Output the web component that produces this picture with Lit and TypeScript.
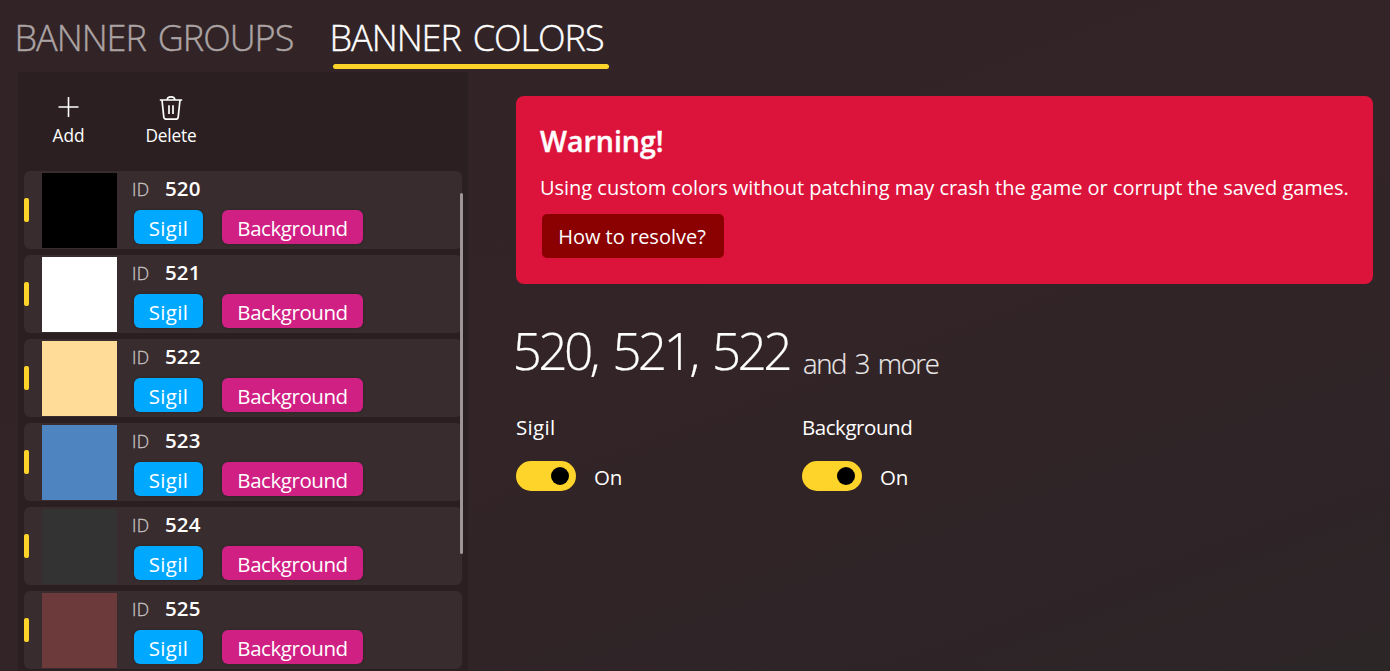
import { LitElement, html, css, svg } from "lit";
import { customElement, property } from "lit/decorators.js";

interface BannerColor {
  id: number;
  color: string;
}

const COLORS: BannerColor[] = [
  { id: 520, color: "#000000" },
  { id: 521, color: "#ffffff" },
  { id: 522, color: "#ffdc98" },
  { id: 523, color: "#4e85c0" },
  { id: 524, color: "#333333" },
  { id: 525, color: "#6c3a3b" },
];

const addIcon = svg`<path d="M11.5 1v20M1.5 11h20" stroke-width="1.6"/>`;
const deleteIcon = svg`<path d="M0.8 4H23.2M8.2 4C8.2 2.2 9.6 0.9 12 0.9S15.8 2.2 15.8 4M3 4L4.8 21.2Q5 23.2 7 23.2H17Q19 23.2 19.2 21.2L21 4M10 9.2V18M14 9.2V18" stroke-width="1.7"/>`;

@customElement("color-item")
class ColorItem extends LitElement {
  @property({ attribute: false }) item!: BannerColor;

  static styles = css`
    :host {
      display: flex;
      align-items: center;
      height: 78px;
      flex: none;
      border-radius: 6px;
      background: #382c2e;
    }
    .mark {
      width: 5px;
      height: 24px;
      border-radius: 2px;
      background: #ffd42a;
      margin-right: 13px;
    }
    .swatch {
      width: 75px;
      height: 75px;
      margin-top: 1px;
    }
    .info {
      display: flex;
      flex-direction: column;
      margin-left: 15px;
      height: 75px;
      margin-top: 1px;
    }
    .line {
      display: flex;
      align-items: baseline;
      height: 37px;
      line-height: 30px;
    }
    .label {
      width: 33px;
      font-size: 17.5px;
      font-weight: 300;
      letter-spacing: 0.4px;
      color: #c8c4c4;
      -webkit-text-stroke: 0.3px currentColor;
    }
    .id {
      font-size: 20.5px;
      font-weight: 600;
      letter-spacing: 0.1px;
    }
    .chips {
      display: flex;
      gap: 19px;
      padding-left: 2px;
    }
    .chip {
      height: 34px;
      box-sizing: border-box;
      padding-top: 1px;
      line-height: 34px;
      border-radius: 6px;
      text-align: center;
      font-size: 20.5px;
      box-shadow: 0 0 3px rgba(0, 0, 0, 0.3);
    }
    .sigil {
      width: 69px;
      background: #00a8ff;
      letter-spacing: 0.3px;
    }
    .bg {
      width: 141px;
      background: #d02084;
      letter-spacing: -0.45px;
    }
  `;

  render() {
    return html`
      <div class="mark"></div>
      <div class="swatch" style="background:${this.item.color}"></div>
      <div class="info">
        <div class="line"><span class="label">ID</span><span class="id">${this.item.id}</span></div>
        <div class="chips"><span class="chip sigil">Sigil</span><span class="chip bg">Background</span></div>
      </div>
    `;
  }
}

@customElement("toggle-field")
class ToggleField extends LitElement {
  @property() label = "";

  static styles = css`
    :host {
      display: block;
      width: 286px;
      font-size: 20.5px;
    }
    .label {
      line-height: 28px;
      height: 48px;
    }
    .label.narrow { letter-spacing: -0.45px; }
    .label.wide { letter-spacing: 0.3px; }
    .row {
      display: flex;
      align-items: center;
      gap: 18px;
      height: 30px;
      line-height: 30px;
    }
    .track {
      display: flex;
      align-items: center;
      justify-content: flex-end;
      box-sizing: border-box;
      width: 60px;
      height: 30px;
      padding-right: 7px;
      border-radius: 15px;
      background: #ffd42a;
    }
    .thumb {
      width: 18px;
      height: 18px;
      border-radius: 50%;
      background: #000;
    }
    .state {
      padding-top: 1px;
      letter-spacing: -0.3px;
    }
  `;

  render() {
    return html`
      <div class="label ${this.label.length > 6 ? "narrow" : "wide"}">${this.label}</div>
      <div class="row"><div class="track"><div class="thumb"></div></div><span class="state">On</span></div>
    `;
  }
}

@customElement("app-root")
class AppRoot extends LitElement {
  static styles = css`
    :host {
      display: flex;
      flex-direction: column;
      position: relative;
      width: 1390px;
      height: 671px;
      overflow: hidden;
      background: linear-gradient(160deg, #322326 0%, #322427 55%, #2e2427 85%, #2c2627 100%);
      color: #fff;
      font-family: "Open Sans", "Noto Sans", sans-serif;
      white-space: nowrap;
    }
    .tabs {
      display: flex;
      height: 72px;
      flex: none;
      box-sizing: border-box;
      padding: 11px 0 0 14.5px;
      font-size: 36px;
      font-weight: 300;
      line-height: 53px;
      -webkit-text-stroke: 0.4px currentColor;
    }
    .tab {
      width: 315px;
      letter-spacing: -1px;
      word-spacing: 3.5px;
      color: #aca4a4;
    }
    .tab.active {
      width: 280px;
      color: #fff;
    }
    .underline {
      width: 276px;
      height: 5px;
      margin-left: 3.5px;
      border-radius: 2.5px;
      background: #ffd42a;
    }
    .body {
      display: flex;
      flex: 1;
      min-height: 0;
      padding-left: 18px;
    }
    .panel {
      display: flex;
      flex-direction: column;
      width: 450px;
      flex: none;
      box-sizing: border-box;
      padding: 0 6px;
      background: #2b1f21;
    }
    .toolbar {
      display: flex;
      height: 99px;
      flex: none;
      box-sizing: border-box;
      padding-top: 23px;
    }
    .tool {
      display: flex;
      flex-direction: column;
      align-items: center;
      width: 89px;
      font-size: 17.25px;
      line-height: 24px;
    }
    .tool + .tool {
      width: 116px;
      letter-spacing: -0.15px;
    }
    .tool svg {
      width: 24px;
      height: 24px;
      margin-top: 1px;
      margin-bottom: 4px;
      fill: none;
      stroke: #fff;
    }
    .list {
      display: flex;
      flex-direction: column;
      gap: 6px;
    }
    .scrollbar {
      position: absolute;
      left: 459.5px;
      top: 192.5px;
      width: 3px;
      height: 361.5px;
      border-radius: 2px;
      background: #9c9696;
    }
    .detail {
      flex: 1;
      min-width: 0;
      padding: 24px 17px 0 48px;
    }
    .warning {
      display: flex;
      flex-direction: column;
      align-items: flex-start;
      height: 188px;
      box-sizing: border-box;
      padding: 24px 24px 0;
      border-radius: 8px;
      background: #dc143c;
      font-size: 20px;
    }
    .warning-title {
      font-size: 28.5px;
      font-weight: 600;
      line-height: 43px;
      height: 52px;
      -webkit-text-stroke: 0.4px currentColor;
    }
    .warning-text {
      line-height: 32px;
      height: 42px;
      letter-spacing: -0.025px;
    }
    .resolve {
      width: 182px;
      height: 44px;
      box-sizing: border-box;
      padding: 1px 2px 0 0;
      margin-left: 2px;
      border-radius: 5px;
      background: #8b0000;
      line-height: 44px;
      text-align: center;
    }
    .heading {
      display: flex;
      height: 129px;
      font-weight: 300;
      -webkit-text-stroke: 0.2px currentColor;
    }
    .ids {
      width: 288px;
      font-size: 51.5px;
      line-height: 132px;
      letter-spacing: -3.7px;
      word-spacing: 5.5px;
      margin-left: -3.5px;
    }
    .more {
      margin-left: 2.5px;
      font-size: 27.5px;
      line-height: 160px;
      letter-spacing: -1.4px;
      word-spacing: 3px;
      color: #ebe8e8;
    }
    .toggles { display: flex; }
  `;

  render() {
    return html`
      <div class="tabs">
        <div class="tab">BANNER GROUPS</div>
        <div class="tab active">BANNER COLORS<div class="underline"></div></div>
      </div>
      <div class="body">
        <div class="panel">
          <div class="toolbar">
            <div class="tool"><svg viewBox="0 0 24 24">${addIcon}</svg>Add</div>
            <div class="tool"><svg viewBox="0 0 24 24">${deleteIcon}</svg>Delete</div>
          </div>
          <div class="list">${COLORS.map((c) => html`<color-item .item=${c}></color-item>`)}</div>
        </div>
        <div class="detail">
          <div class="warning">
            <div class="warning-title">Warning!</div>
            <div class="warning-text">Using custom colors without patching may crash the game or corrupt the saved games.</div>
            <div class="resolve">How to resolve?</div>
          </div>
          <div class="heading"><div class="ids">520, 521, 522</div><div class="more">and 3 more</div></div>
          <div class="toggles">
            <toggle-field label="Sigil"></toggle-field>
            <toggle-field label="Background"></toggle-field>
          </div>
        </div>
      </div>
      <div class="scrollbar"></div>
    `;
  }
}
